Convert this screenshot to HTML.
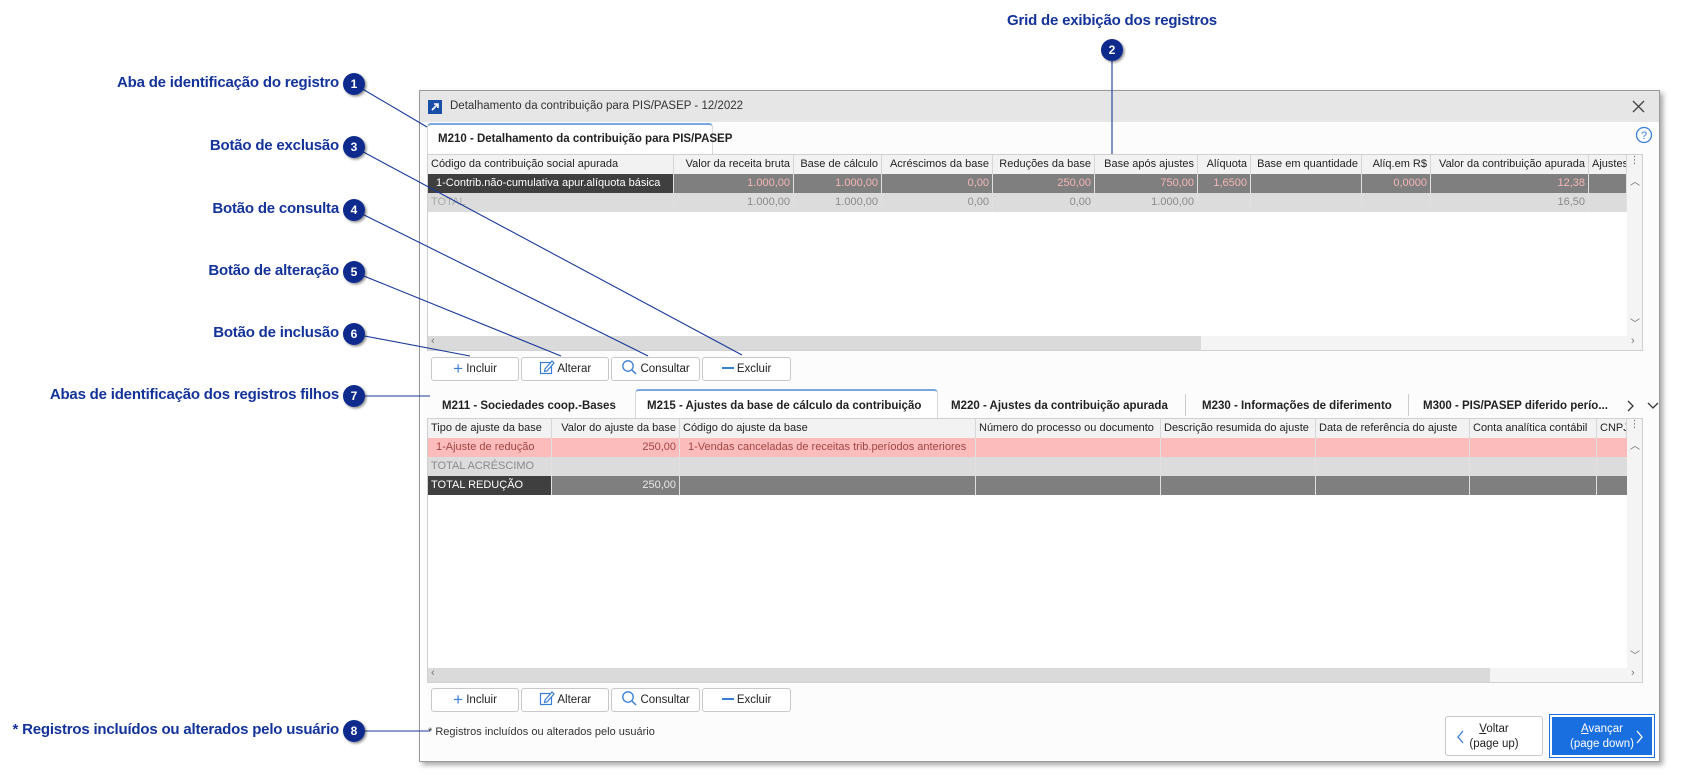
<!DOCTYPE html>
<html><head><meta charset="utf-8"><style>
*{box-sizing:border-box;margin:0;padding:0}
body{width:1684px;height:776px;background:#fff;position:relative;overflow:hidden;font-family:"Liberation Sans","DejaVu Sans",sans-serif;font-size:11px;color:#222}
.a{position:absolute}
.lbl{position:absolute;font-weight:bold;font-size:15px;color:#14339a;white-space:nowrap;text-align:right;letter-spacing:-0.2px}
.win{left:419px;top:90px;width:1241px;height:672px;background:#fcfcfc;border:1px solid #9a9a9a;box-shadow:3px 3px 5px rgba(0,0,0,.35)}
.title{left:0;top:0;width:100%;height:31px;background:#e6e6e6}
.grid{background:#fff;border:1px solid #d0d0d0}
.c{position:absolute;height:100%;border-right:1px solid #e0e0e0;white-space:nowrap;overflow:hidden;padding:0 3px;line-height:18px;font-size:11px}
.hd .c{background:#f2f2f2;border-right:1px solid #d6d6d6}
.r{text-align:right}
.btn{position:absolute;height:24px;background:#fff;border:1px solid #c8c8c8;border-radius:3px;font-size:11.5px;line-height:22px;text-align:center}
.tab{position:absolute;font-weight:bold;font-size:11.5px;white-space:nowrap}
</style></head><body>

<div class="lbl" style="right:1345px;top:74px">Aba de identificação do registro</div>
<div class="lbl" style="right:1345px;top:137px">Botão de exclusão</div>
<div class="lbl" style="right:1345px;top:200px">Botão de consulta</div>
<div class="lbl" style="right:1345px;top:262px">Botão de alteração</div>
<div class="lbl" style="right:1345px;top:324px">Botão de inclusão</div>
<div class="lbl" style="right:1345px;top:386px">Abas de identificação dos registros filhos</div>
<div class="lbl" style="right:1345px;top:721px">* Registros incluídos ou alterados pelo usuário</div>
<div class="lbl" style="left:990px;top:12px;width:244px;text-align:center">Grid de exibição dos registros</div>

<div class="a win">
  <div class="a title">
    <div class="a" style="left:8px;top:9px;width:14px;height:14px;background:#1a4fa8"><svg width="14" height="14"><path d="M4 10 L10 4 M6 4 H10 V8" stroke="#fff" stroke-width="1.6" fill="none"/></svg></div>
    <div class="a" style="left:30px;top:9px;font-size:11.5px;color:#333">Detalhamento da contribuição para PIS/PASEP - 12/2022</div>
    <svg class="a" style="right:14px;top:9px" width="13" height="13"><path d="M1 1L12 12M12 1L1 12" stroke="#444" stroke-width="1.3"/></svg>
  </div>
  <div class="a" style="left:7px;top:32px;width:286px;height:31px;background:#fff;border:1px solid #d8d8d8;border-top:2px solid #7aa7e0;border-bottom:0;border-radius:4px 4px 0 0"></div>
  <div class="tab" style="left:18px;top:42px">M210 - Detalhamento da contribuição para PIS/PASEP</div>
  <svg class="a" style="right:6px;top:35px" width="18" height="18"><circle cx="9" cy="9" r="7.5" fill="none" stroke="#3a7fd5" stroke-width="1.3"/><text x="9" y="13" font-size="11" text-anchor="middle" fill="#3a7fd5" font-family="Liberation Sans">?</text></svg>

  <div class="a grid" style="left:7px;top:63px;width:1216px;height:197px">
    <div class="a hd" style="left:0;top:0;width:1199px;height:19px">
      <div class="c" style="left:0;width:246px">Código da contribuição social apurada</div>
      <div class="c r" style="left:246px;width:120px">Valor da receita bruta</div>
      <div class="c r" style="left:366px;width:88px">Base de cálculo</div>
      <div class="c r" style="left:454px;width:111px">Acréscimos da base</div>
      <div class="c r" style="left:565px;width:102px">Reduções da base</div>
      <div class="c r" style="left:667px;width:103px">Base após ajustes</div>
      <div class="c r" style="left:770px;width:53px">Alíquota</div>
      <div class="c r" style="left:823px;width:111px">Base em quantidade</div>
      <div class="c r" style="left:934px;width:69px">Alíq.em R$</div>
      <div class="c r" style="left:1003px;width:158px">Valor da contribuição apurada</div>
      <div class="c" style="left:1161px;width:38px">Ajustes</div>
    </div>
    <div class="a" style="left:0;top:19px;width:1199px;height:19px;background:#7f7f7f;color:#f4b6b6">
      <div class="c" style="left:0;width:246px;background:#3f3f3f;color:#fff;padding-left:8px">1-Contrib.não-cumulativa apur.alíquota básica</div>
      <div class="c r" style="left:246px;width:120px">1.000,00</div>
      <div class="c r" style="left:366px;width:88px">1.000,00</div>
      <div class="c r" style="left:454px;width:111px">0,00</div>
      <div class="c r" style="left:565px;width:102px">250,00</div>
      <div class="c r" style="left:667px;width:103px">750,00</div>
      <div class="c r" style="left:770px;width:53px">1,6500</div>
      <div class="c r" style="left:823px;width:111px"></div>
      <div class="c r" style="left:934px;width:69px">0,0000</div>
      <div class="c r" style="left:1003px;width:158px">12,38</div>
      <div class="c" style="left:1161px;width:38px"></div>
    </div>
    <div class="a" style="left:0;top:38px;width:1199px;height:19px;background:#dcdcdc;color:#8a8a8a">
      <div class="c" style="left:0;width:246px;color:#aaa">TOTAL</div>
      <div class="c r" style="left:246px;width:120px">1.000,00</div>
      <div class="c r" style="left:366px;width:88px">1.000,00</div>
      <div class="c r" style="left:454px;width:111px">0,00</div>
      <div class="c r" style="left:565px;width:102px">0,00</div>
      <div class="c r" style="left:667px;width:103px">1.000,00</div>
      <div class="c r" style="left:770px;width:53px"></div>
      <div class="c r" style="left:823px;width:111px"></div>
      <div class="c r" style="left:934px;width:69px"></div>
      <div class="c r" style="left:1003px;width:158px">16,50</div>
      <div class="c" style="left:1161px;width:38px"></div>
    </div>
    <div class="a" style="left:1199px;top:0;width:15px;height:181px;background:#f4f4f4;color:#6a6a6a;text-align:center;font-size:10px">⋮<span style="position:absolute;left:3px;top:18px">︿</span><span style="position:absolute;left:3px;top:160px">﹀</span></div>
    <div class="a" style="left:0;top:181px;width:1214px;height:14px;background:#f4f4f4"><div class="a" style="left:0;top:0;width:773px;height:14px;background:#dadada"></div><span class="a" style="left:3px;top:-1px;color:#777">‹</span><span class="a" style="left:1203px;top:-1px;color:#777">›</span></div>
  </div>

  <div class="btn" style="left:11px;top:266px;width:88px"><span style="color:#3a7fd5;font-size:17px;vertical-align:-2px">+</span> Incluir</div>
  <div class="btn" style="left:101px;top:266px;width:88px"><svg width="16" height="16" style="vertical-align:-3px"><rect x="1.5" y="3.5" width="11" height="11" fill="none" stroke="#3a7fd5" stroke-width="1.2"/><path d="M6 10 L13 2 L15 4 L8 12 L5.5 12.5Z" fill="#fff" stroke="#3a7fd5" stroke-width="1.2"/></svg> Alterar</div>
  <div class="btn" style="left:191px;top:266px;width:89px"><svg width="16" height="16" style="vertical-align:-3px"><circle cx="7" cy="7" r="5.2" fill="none" stroke="#3a7fd5" stroke-width="1.3"/><path d="M11 11L15 15" stroke="#3a7fd5" stroke-width="1.5"/></svg> Consultar</div>
  <div class="btn" style="left:282px;top:266px;width:89px"><span style="display:inline-block;width:12px;height:2px;background:#3a7fd5;vertical-align:3px"></span> Excluir</div>

  <div class="a" style="left:215px;top:298px;width:303px;height:29px;background:#fff;border:1px solid #d8d8d8;border-top:2px solid #7aa7e0;border-bottom:0;border-radius:4px 4px 0 0"></div>
  <div class="tab" style="left:22px;top:309px">M211 - Sociedades coop.-Bases</div>
  <div class="tab" style="left:227px;top:309px">M215 - Ajustes da base de cálculo da contribuição</div>
  <div class="tab" style="left:531px;top:309px">M220 - Ajustes da contribuição apurada</div>
  <div class="a" style="left:765px;top:303px;width:1px;height:22px;background:#ccc"></div>
  <div class="tab" style="left:782px;top:309px">M230 - Informações de diferimento</div>
  <div class="a" style="left:988px;top:303px;width:1px;height:22px;background:#ccc"></div>
  <div class="tab" style="left:1003px;top:309px;width:196px;overflow:hidden">M300 - PIS/PASEP diferido perío...</div>
  <svg class="a" style="left:1205px;top:308px" width="40" height="14"><path d="M3 2L8 7L3 12" stroke="#333" fill="none" stroke-width="1.3"/><path d="M23 4L28 9L33 4" stroke="#333" fill="none" stroke-width="1.3"/></svg>

  <div class="a grid" style="left:7px;top:327px;width:1216px;height:265px">
    <div class="a hd" style="left:0;top:0;width:1199px;height:19px">
      <div class="c" style="left:0;width:124px">Tipo de ajuste da base</div>
      <div class="c r" style="left:124px;width:128px">Valor do ajuste da base</div>
      <div class="c" style="left:252px;width:296px">Código do ajuste da base</div>
      <div class="c" style="left:548px;width:185px">Número do processo ou documento</div>
      <div class="c" style="left:733px;width:155px">Descrição resumida do ajuste</div>
      <div class="c" style="left:888px;width:154px">Data de referência do ajuste</div>
      <div class="c" style="left:1042px;width:127px">Conta analítica contábil</div>
      <div class="c" style="left:1169px;width:30px">CNPJ</div>
    </div>
    <div class="a" style="left:0;top:19px;width:1199px;height:19px;background:#fdbcbc;color:#a04545">
      <div class="c" style="left:0;width:124px;padding-left:8px">1-Ajuste de redução</div>
      <div class="c r" style="left:124px;width:128px">250,00</div>
      <div class="c" style="left:252px;width:296px;padding-left:8px">1-Vendas canceladas de receitas trib.períodos anteriores</div>
      <div class="c" style="left:548px;width:185px"></div><div class="c" style="left:733px;width:155px"></div><div class="c" style="left:888px;width:154px"></div><div class="c" style="left:1042px;width:127px"></div>
    </div>
    <div class="a" style="left:0;top:38px;width:1199px;height:19px;background:#dcdcdc;color:#8a8a8a">
      <div class="c" style="left:0;width:124px">TOTAL ACRÉSCIMO</div>
      <div class="c" style="left:124px;width:128px"></div><div class="c" style="left:252px;width:296px"></div><div class="c" style="left:548px;width:185px"></div><div class="c" style="left:733px;width:155px"></div><div class="c" style="left:888px;width:154px"></div><div class="c" style="left:1042px;width:127px"></div>
    </div>
    <div class="a" style="left:0;top:57px;width:1199px;height:19px;background:#7f7f7f;color:#e8e8e8">
      <div class="c" style="left:0;width:124px;background:#3f3f3f;color:#fff">TOTAL REDUÇÃO</div>
      <div class="c r" style="left:124px;width:128px">250,00</div>
      <div class="c" style="left:252px;width:296px"></div><div class="c" style="left:548px;width:185px"></div><div class="c" style="left:733px;width:155px"></div><div class="c" style="left:888px;width:154px"></div><div class="c" style="left:1042px;width:127px"></div>
    </div>
    <div class="a" style="left:1199px;top:0;width:15px;height:249px;background:#f4f4f4;color:#6a6a6a;text-align:center;font-size:10px">⋮<span style="position:absolute;left:3px;top:18px">︿</span><span style="position:absolute;left:3px;top:228px">﹀</span></div>
    <div class="a" style="left:0;top:249px;width:1214px;height:14px;background:#f4f4f4"><div class="a" style="left:0;top:0;width:1062px;height:14px;background:#dadada"></div><span class="a" style="left:3px;top:-1px;color:#777">‹</span><span class="a" style="left:1203px;top:-1px;color:#777">›</span></div>
  </div>

  <div class="btn" style="left:11px;top:597px;width:88px"><span style="color:#3a7fd5;font-size:17px;vertical-align:-2px">+</span> Incluir</div>
  <div class="btn" style="left:101px;top:597px;width:88px"><svg width="16" height="16" style="vertical-align:-3px"><rect x="1.5" y="3.5" width="11" height="11" fill="none" stroke="#3a7fd5" stroke-width="1.2"/><path d="M6 10 L13 2 L15 4 L8 12 L5.5 12.5Z" fill="#fff" stroke="#3a7fd5" stroke-width="1.2"/></svg> Alterar</div>
  <div class="btn" style="left:191px;top:597px;width:89px"><svg width="16" height="16" style="vertical-align:-3px"><circle cx="7" cy="7" r="5.2" fill="none" stroke="#3a7fd5" stroke-width="1.3"/><path d="M11 11L15 15" stroke="#3a7fd5" stroke-width="1.5"/></svg> Consultar</div>
  <div class="btn" style="left:282px;top:597px;width:89px"><span style="display:inline-block;width:12px;height:2px;background:#3a7fd5;vertical-align:3px"></span> Excluir</div>

  <div class="a" style="left:8px;top:635px;font-size:11px;color:#333">* Registros incluídos ou alterados pelo usuário</div>

  <div class="a" style="left:1025px;top:625px;width:98px;height:40px;background:#fff;border:1px solid #c8c8c8;border-radius:3px;text-align:center;line-height:15px;padding-top:5px;font-size:11.5px"><u>V</u>oltar<br>(page up)<svg class="a" style="left:10px;top:13px" width="10" height="14"><path d="M7 1L2 7L7 13" stroke="#3a7fd5" fill="none" stroke-width="1.3"/></svg></div>
  <div class="a" style="left:1130px;top:624px;width:104px;height:42px;background:#1a6fe0;border:2px solid #fff;outline:1px solid #1a6fe0;color:#fff;text-align:center;line-height:15px;padding-top:5px;font-size:11.5px"><u>A</u>vançar<br>(page down)<svg class="a" style="right:8px;top:13px" width="10" height="14"><path d="M3 1L8 7L3 13" stroke="#fff" fill="none" stroke-width="1.3"/></svg></div>
</div>

<svg class="a" style="left:0;top:0" width="1684" height="776">
  <defs><filter id="s" x="-50%" y="-50%" width="200%" height="200%"><feDropShadow dx="1.5" dy="1.5" stdDeviation="1.2" flood-opacity=".45"/></filter></defs>
  <g stroke="#1a3a9a" stroke-width="1.1" fill="none">
    <path d="M354 84 L427 127"/>
    <path d="M354 147 L742 355"/>
    <path d="M354 210 L648 356"/>
    <path d="M354 272 L561 356"/>
    <path d="M354 334 L470 356"/>
    <path d="M354 396 L430 396"/>
    <path d="M354 731 L430 731"/>
    <path d="M1112 50 L1112 154"/>
  </g>
  <g fill="#0d2a8c" filter="url(#s)">
    <circle cx="354" cy="84" r="11"/><circle cx="354" cy="147" r="11"/><circle cx="354" cy="210" r="11"/><circle cx="354" cy="272" r="11"/><circle cx="354" cy="334" r="11"/><circle cx="354" cy="396" r="11"/><circle cx="354" cy="731" r="11"/><circle cx="1112" cy="50" r="11"/>
  </g>
  <g fill="#fff" font-family="Liberation Sans" font-weight="bold" font-size="12" text-anchor="middle">
    <text x="354" y="88">1</text><text x="354" y="151">3</text><text x="354" y="214">4</text><text x="354" y="276">5</text><text x="354" y="338">6</text><text x="354" y="400">7</text><text x="354" y="735">8</text><text x="1112" y="54">2</text>
  </g>
</svg>
</body></html>
